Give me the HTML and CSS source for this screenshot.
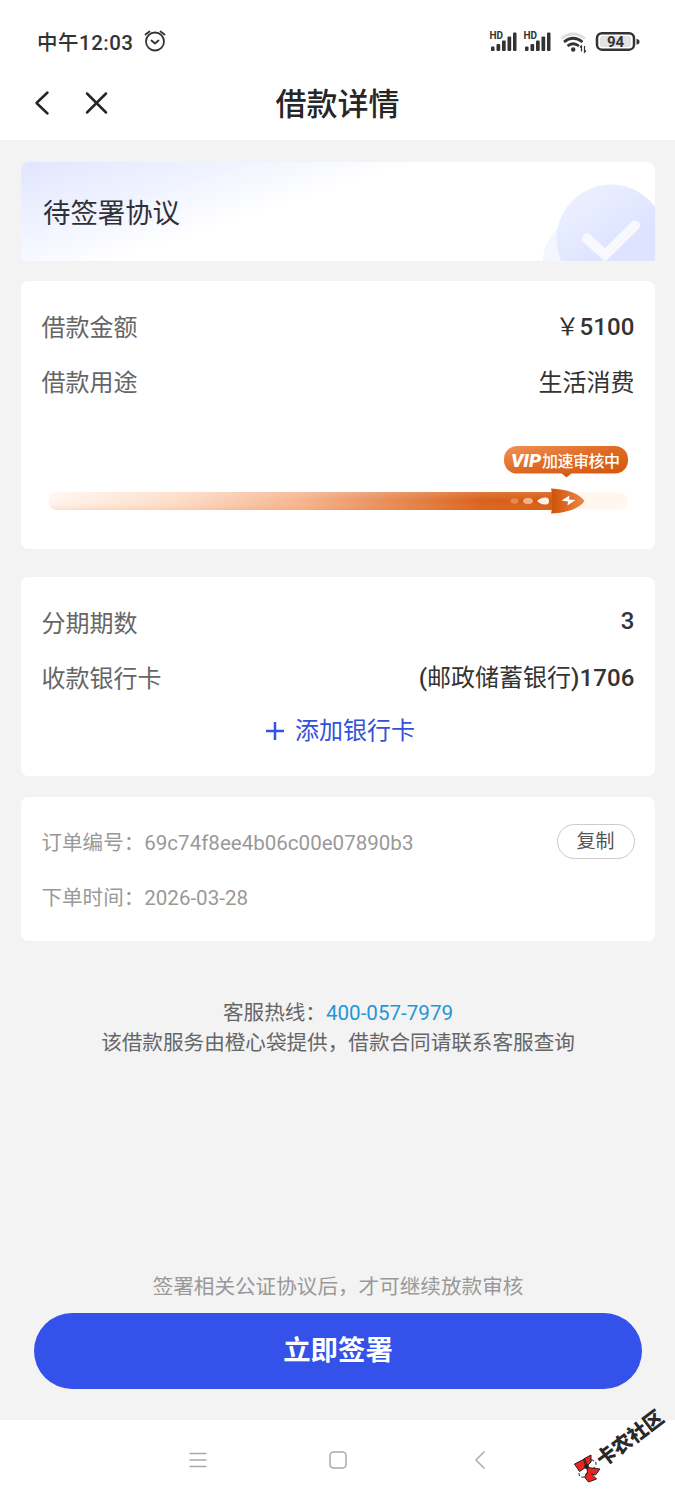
FILE: index.html
```html
<!DOCTYPE html>
<html lang="zh-CN">
<head>
<meta charset="utf-8">
<title>借款详情</title>
<link rel="stylesheet" href="styles.css">
</head>
<body>
<div class="screen">
  <div class="status">
    <span class="time">中午12:03</span>
    <svg class="alarm" width="24" height="24" viewBox="0 0 24 24" fill="none" stroke="#333" stroke-width="1.8" stroke-linecap="round" stroke-linejoin="round"><circle cx="12" cy="12.500" r="9"/><path d="M8.500 11.500l3.500 3 3.500-3M2.500 5.500l4-3M21.500 5.500l-4-3"/></svg>
    <svg class="signals" width="152" height="28" viewBox="0 0 152 28">
      <g id="sim" fill="#333">
        <text class="hd" x="1.500" y="10.500">HD</text>
        <rect x="3" y="18.500" width="3.500" height="4.500" rx="1"/><rect x="8.500" y="16" width="3.700" height="7" rx="1"/><rect x="14" y="12.500" width="3.700" height="10.500" rx="1"/><rect x="19.500" y="8.500" width="3.700" height="14.500" rx="1"/><rect x="25" y="4.500" width="3.500" height="18.500" rx="1"/>
      </g>
      <use href="#sim" x="34"/>
      <g fill="none" stroke-width="2.700"><path stroke="#ddd" d="M73.500 10.500Q85 1.500 97 10.500"/><path stroke="#333" d="M76 14Q85 6.500 94.500 14M79.500 18Q85 13.500 91 18"/></g>
      <circle cx="85.200" cy="21.500" r="2.200" fill="#333"/>
      <path d="M93.500 23.500v-5.500l-1.500 1.500M96.500 18v6l1.500-1.500" fill="none" stroke="#333" stroke-width="1.200"/>
      <rect x="109" y="5.200" width="37" height="16.500" rx="5" fill="#fff" stroke="#333" stroke-width="2.500"/>
      <rect x="112" y="8" width="31" height="11" rx="2.500" fill="#e3e3e3"/>
      <path d="M148.500 11q3 0 3 2.700t-3 2.700z" fill="#333"/>
      <text class="battery" x="127.500" y="19" text-anchor="middle">94</text>
    </svg>
  </div>
  <header class="header">
    <svg class="nav-icons" width="80" height="28" viewBox="0 0 80 28" fill="none" stroke="#262626" stroke-width="2.500" stroke-linecap="round" stroke-linejoin="round"><path d="M15.500 3.500L4.500 14L15.500 24.500M55 4.500L74 23.500M74 4.500L55 23.500"/></svg>
    <h1>借款详情</h1>
  </header>
  <main>
    <section class="banner">
      <span>待签署协议</span>
      <svg width="114" height="78" viewBox="0 0 114 78">
        <defs><linearGradient id="disc" x1="0" y1="0" x2=".7" y2="1"><stop stop-color="#eff3ff"/><stop offset=".65" stop-color="#dee4ff"/></linearGradient></defs>
        <circle cx="45" cy="78" r="43" fill="#f3f5ff"/>
        <rect x="45" width="69" height="30" fill="#fff"/>
        <circle cx="70" cy="56" r="54.500" fill="url(#disc)"/>
        <path d="M46 55.500L64 72L94 42.500" fill="none" stroke="#f7f9ff" stroke-width="10" stroke-linecap="round" stroke-linejoin="miter"/>
      </svg>
    </section>
    <section class="card loan">
      <div class="row"><span class="label">借款金额</span><span class="value strong"><span class="yen">￥</span>5100</span></div>
      <div class="row"><span class="label">借款用途</span><span class="value">生活消费</span></div>
      <svg class="progress" width="594" height="76" viewBox="0 0 594 76">
        <defs>
          <linearGradient id="track"><stop stop-color="#fff6f0"/><stop offset=".25" stop-color="#fddcc7"/><stop offset=".5" stop-color="#f4b18b"/><stop offset=".85" stop-color="#d75b12"/><stop offset="1" stop-color="#d45408"/></linearGradient>
          <linearGradient id="shine" x2="0" y2="1"><stop stop-color="#fff" stop-opacity=".18"/><stop offset=".5" stop-color="#fff" stop-opacity=".03"/><stop offset="1" stop-color="#ff8a35" stop-opacity=".2"/></linearGradient>
          <linearGradient id="pill" x2="1" y2="1"><stop stop-color="#f29255"/><stop offset=".5" stop-color="#df6a25"/><stop offset="1" stop-color="#d4570b"/></linearGradient>
          <linearGradient id="rocket"><stop stop-color="#cf5205"/><stop offset="1" stop-color="#ed8748"/></linearGradient>
        </defs>
        <rect x="440" y="52.500" width="147" height="17" rx="8.500" fill="#fff6ef"/>
        <path d="M15.500 52H518v18H15.500q-8-1-8-9t8-9z" fill="url(#track)"/>
        <path d="M15.500 52H518v18H15.500q-8-1-8-9t8-9z" fill="url(#shine)"/>
        <path d="M510 48.500C526 49 539 54 543.500 61C539 68 526 73 510 73.500Q513 61 510 48.500Z" fill="url(#rocket)"/>
        <path d="M520.500 60.500L528.500 55.500L528 59.500L534.500 60L526.500 65.500L527 61.500Z" fill="#fff"/>
        <ellipse cx="473.500" cy="61" rx="4" ry="2.800" fill="#e48a52"/><ellipse cx="487" cy="61" rx="5" ry="3.300" fill="#efb189"/><path d="M496 61q4-4 9-3.500 3 0 3 3.500t-3 3.500q-5 .5-9-3.500z" fill="#fff0e5"/>
        <path d="M519 32h13l-6.500 5.500z" fill="#cf5a17"/>
        <rect x="463" y="6" width="124" height="27.500" rx="13" fill="url(#pill)"/>
        <text class="vip" x="470" y="26.500" textLength="30" lengthAdjust="spacingAndGlyphs">VIP</text>
        <text class="pill-text" x="501" y="26.500" textLength="78">加速审核中</text>
      </svg>
    </section>
    <section class="card bank">
      <div class="row"><span class="label">分期期数</span><span class="value strong count">3</span></div>
      <div class="row"><span class="label">收款银行卡</span><span class="value strong">(<span class="bank-name">邮政储蓄银行</span>)1706</span></div>
      <a class="add"><svg width="20" height="20" viewBox="0 0 20 20"><path d="M1 10h18M10 1v18" stroke="#3452e8" stroke-width="2.500"/></svg><span>添加银行卡</span></a>
    </section>
    <section class="card order">
      <div class="meta"><span>订单编号：<span class="number">69c74f8ee4b06c00e07890b3</span></span><button class="copy">复制</button></div>
      <div class="meta"><span>下单时间：<span class="date">2026-03-28</span></span></div>
    </section>
    <div class="service">
      <p>客服热线：<a>400-057-7979</a></p>
      <p>该借款服务由橙心袋提供，借款合同请联系客服查询</p>
    </div>
    <div class="action">
      <p>签署相关公证协议后，才可继续放款审核</p>
      <button class="sign">立即签署</button>
    </div>
  </main>
  <nav class="system">
    <svg width="304" height="24" viewBox="0 0 304 24" fill="none" stroke="#aaa" stroke-width="1.500" stroke-linecap="round"><path d="M5 5.500h16M5 12h16M5 18.500h16M299 4l-8 8 8 8"/><rect x="145" y="4" width="16" height="16" rx="3.500"/></svg>
  </nav>
  <svg class="watermark" width="115" height="90" viewBox="0 0 115 90">
    <g stroke="#222" stroke-width="1">
      <path d="M31 60q5 0 5 4t-5 5l-5-3zM26 67q-7 1-7 6 0 5 5 4l4-6z" fill="#fff" stroke-dasharray="3 2"/>
      <path d="M14.500 64l10-5 3 7-8 5.500zM23.500 59l7.500-4v7l-5 5zM27 67.500l13 1.500-4.500 6-4-1 5 5-8 3-4-5 3-4z" fill="#ed231c"/>
      <circle cx="26.500" cy="66.500" r="2" fill="#222"/>
    </g>
    <text class="watermark-text" transform="translate(43 67.500) rotate(-37)" textLength="78" lengthAdjust="spacingAndGlyphs">卡农社区</text>
  </svg>
</div>
</body>
</html>
```
FILE: styles.css
```css
* { box-sizing: border-box; }
body { margin: 0; background: #f3f3f3; font-family: Roboto, "Noto Sans CJK SC", sans-serif; color: #333; }
h1, p { margin: 0; }
button { font-family: inherit; }
svg { display: block; flex: none; }
.screen { position: relative; width: 675px; height: 1500px; display: flex; flex-direction: column; overflow: hidden; }
.status { height: 66px; flex: none; background: #fff; display: flex; align-items: center; padding: 18px 35px 0 37px; }
.time { font-size: 20.500px; font-weight: 500; letter-spacing: .5px; line-height: 28px; padding-top: 1px; }
.alarm { margin: -2px 0 0 9px; }
.signals { margin-left: auto; }
.hd { font: 700 10px Roboto, sans-serif; }
.battery { font: 700 15px Roboto, sans-serif; fill: #333; }
.header { height: 74px; flex: none; background: #fff; display: grid; grid-template-columns: 130px 1fr 130px; align-items: center; justify-items: center; }
.nav-icons { justify-self: start; margin-left: 32px; }
.header h1 { font-size: 31px; line-height: 40px; font-weight: 500; color: #262626; padding-top: 3px; }
main { flex: 1; display: flex; flex-direction: column; padding: 22px 20px 31px 21px; }
.banner { height: 99px; border-radius: 8px 8px 0 0; overflow: hidden; background: linear-gradient(162deg, #e0e6ff 0, #f0f3ff 23%, #fff 42%); display: flex; align-items: center; justify-content: space-between; padding-left: 22px; font-size: 27.400px; color: #303138; }
.banner span { padding-bottom: 2px; }
.banner svg { align-self: flex-end; }
.card { background: #fff; border-radius: 7px; padding: 0 20.500px; font-size: 24px; }
.loan { height: 268px; margin-top: 20px; padding-top: 19px; }
.bank { height: 199px; margin-top: 28px; padding-top: 19px; }
.order { height: 144px; margin-top: 21px; padding-top: 16px; }
.row { height: 55px; display: flex; justify-content: space-between; align-items: center; line-height: 32px; }
.label { color: #666; }
.value { color: #333; }
.strong { font-weight: 500; letter-spacing: .1px; padding-bottom: 1px; }
.yen, .bank-name { font-weight: 400; letter-spacing: 0; }
.count { padding-bottom: 5px; }
.progress { margin: 30px 0 0 -1px; }
.add { display: flex; align-items: center; justify-content: center; gap: 10px; height: 50px; color: #3452d8; line-height: 32px; padding-left: 4px; }
.meta { display: flex; justify-content: space-between; align-items: center; height: 55px; font-size: 20.550px; color: #999; }
.copy { width: 78px; height: 35px; border: 1px solid #ccc; border-radius: 18px; background: #fff; color: #555; font-size: 19px; line-height: 29px; padding: 0; margin-top: 2px; }
.service { margin-top: 57px; text-align: center; font-size: 20.600px; line-height: 30px; color: #666; }
.service a { color: #2297d8; }
.action { margin-top: auto; padding: 0 13px; text-align: center; }
.action p { font-size: 20.600px; line-height: 30px; color: #999; padding-bottom: 11px; }
.sign { display: block; width: 100%; height: 76px; border: 0; border-radius: 38px; background: #3452e9; color: #fff; font-size: 27.400px; font-weight: 700; padding: 0 0 6px; }
.system { height: 80px; flex: none; background: #fff; display: flex; justify-content: center; align-items: center; padding: 0 1px 1px 0; }
.vip { font: italic 900 19px Roboto, sans-serif; fill: #fff; }
.pill-text { font: 500 16px "Noto Sans CJK SC", sans-serif; fill: #fff; }
.watermark { position: absolute; left: 560px; top: 1400px; overflow: visible; }
.watermark-text { font: 900 20px "Noto Sans CJK SC", sans-serif; fill: #292929; }
```
